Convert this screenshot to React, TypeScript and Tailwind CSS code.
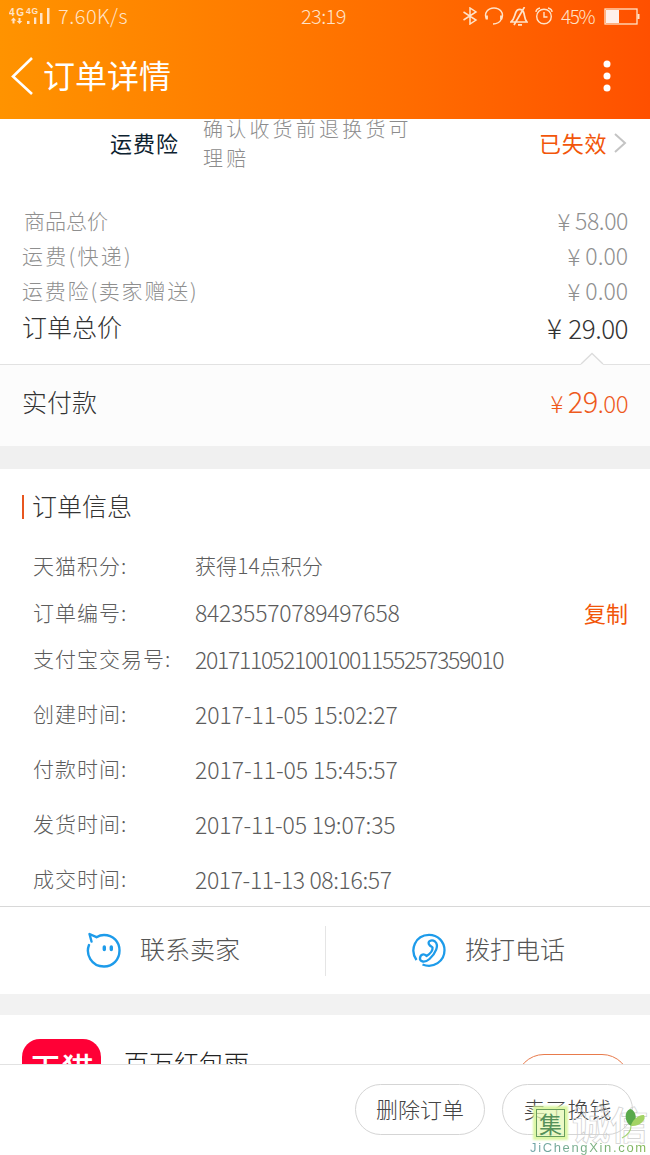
import React from "react";

type Fee = {
  label: string;
  amount: string;
  labelClass: string;
  amountClass: string;
};

type InfoRow = {
  label: string;
  value: string;
  rowClass: string;
  labelClass: string;
  valueClass: string;
  copy?: boolean;
};

const fees: Fee[] = [
  { label: "商品总价", amount: "58.00", labelClass: "pl-[2px]", amountClass: "tracking-[-0.4px]" },
  { label: "运费(快递)", amount: "0.00", labelClass: "tracking-[2.3px]", amountClass: "tracking-[0px]" },
  { label: "运费险(卖家赠送)", amount: "0.00", labelClass: "tracking-[1.8px]", amountClass: "tracking-[0px]" },
];

const infoRows: InfoRow[] = [
  { label: "天猫积分:", value: "获得14点积分", rowClass: "h-[47px]", labelClass: "tracking-[1px]", valueClass: "text-[21px] tracking-[0.1px]" },
  { label: "订单编号:", value: "84235570789497658", rowClass: "h-[47px]", labelClass: "tracking-[1px]", valueClass: "text-[23px] tracking-[-0.28px]", copy: true },
  { label: "支付宝交易号:", value: "2017110521001001155257359010", rowClass: "h-[46px]", labelClass: "tracking-[1px]", valueClass: "text-[23px] tracking-[-1.3px]" },
  { label: "创建时间:", value: "2017-11-05 15:02:27", rowClass: "h-[64px]", labelClass: "tracking-[1px]", valueClass: "text-[23px] tracking-[-0.08px]" },
  { label: "付款时间:", value: "2017-11-05 15:45:57", rowClass: "h-[46px]", labelClass: "tracking-[1px]", valueClass: "text-[23px] tracking-[-0.08px]" },
  { label: "发货时间:", value: "2017-11-05 19:07:35", rowClass: "h-[64px]", labelClass: "tracking-[1px]", valueClass: "text-[23px] tracking-[-0.2px]" },
  { label: "成交时间:", value: "2017-11-13 08:16:57", rowClass: "h-[46px]", labelClass: "tracking-[1px]", valueClass: "text-[23px] tracking-[-0.4px]" },
];

function StatusBar() {
  return (
    <div className="flex h-8 items-center text-[20px] leading-8 text-[#ffe3c8]">
      <div className="flex w-[292px] items-center pl-[9px]">
        <svg width="42" height="18" viewBox="0 0 42 18" className="mr-[7px]" fill="currentColor">
          <text x="0" y="8.5" fontSize="10" fontWeight="700" textLength="15" fontFamily="Liberation Sans, sans-serif">4G</text>
          <text x="17" y="7" fontSize="8.5" fontWeight="700" textLength="12" fontFamily="Liberation Sans, sans-serif">4G</text>
          <path d="M4.500 10.500l2.800 3H5.500v3h-2v-3H1.700zM10.500 17l-2.800-3h1.800v-3h2v3h1.800z" />
          <rect x="18" y="14" width="2.500" height="3" />
          <rect x="25" y="10.500" width="2.300" height="6.500" />
          <rect x="31" y="6" width="2.500" height="11" />
          <rect x="38" y="1" width="2.500" height="16" />
        </svg>
        <span className="tracking-[0.5px]">7.60K/s</span>
      </div>
      <span className="w-[170px] pl-[9px] tracking-[-0.6px]">23:19</span>
      <div className="flex items-center">
        {/* bluetooth */}
        <svg width="16" height="18" viewBox="0 0 16 18" fill="none" stroke="currentColor" strokeWidth="1.500">
          <path d="M1.500 5l12.500 8L8 17V1l6 4-12.500 8" />
        </svg>
        {/* headset */}
        <svg width="20" height="18" viewBox="0 0 20 18" className="ml-[6px]" fill="none" stroke="currentColor" strokeWidth="1.400">
          <path d="M2.500 12C-.5 6 4 1 10 1s10.500 5 7.500 11c-1.500 3-4 5-8.500 5" />
          <path d="M2.800 8.500v4M17.200 8.500v4" strokeWidth="2.200" />
        </svg>
        {/* muted bell */}
        <svg width="18" height="19" viewBox="0 0 18 19" className="ml-[6px]" fill="none" stroke="currentColor" strokeWidth="1.700">
          <path d="M1 15h16c-3-3-2-7-3.500-10C12 1.500 7.500 1.500 6 5 4.500 8 4.500 12 1 15zM8 17.800h4M14.500 0L4 18" />
        </svg>
        {/* alarm */}
        <svg width="18" height="18" viewBox="0 0 18 18" className="ml-[7px]" fill="none" stroke="currentColor" strokeWidth="1.400">
          <circle cx="9" cy="9.500" r="7.300" />
          <path d="M9 5v5h3.500M1 5c0-2 1.500-3.500 4-4M17 5c0-2-1.500-3.500-4-4" />
        </svg>
      </div>
      <span className="ml-[8px] w-[43px] text-[19px] tracking-[-1.4px]">45%</span>
      <svg width="36" height="17" viewBox="0 0 36 17" fill="none">
        <rect x="1" y="1" width="32" height="15" stroke="#ffe3c8" strokeWidth="1.300" />
        <rect x="2" y="2" width="13" height="13" fill="#fff0ea" />
        <rect x="33.500" y="6" width="2" height="5" fill="#ffe3c8" />
      </svg>
    </div>
  );
}

function Header() {
  return (
    <header className="h-[119px] shrink-0 bg-linear-to-r from-[#ff9300] to-[#ff5000]">
      <StatusBar />
      <div className="flex h-[87px] items-center pl-[10px] text-white">
        <svg width="24" height="40" viewBox="0 0 24 40" fill="none" stroke="currentColor" strokeWidth="2.600">
          <path d="M22 2L3 20.500 22 38" />
        </svg>
        <h1 className="-mt-[3px] ml-[9px] flex-1 text-[32px] font-normal">订单详情</h1>
        <svg width="8" height="32" viewBox="0 0 8 32" className="mr-[39px]" fill="currentColor">
          <circle cx="4" cy="4" r="3.500" />
          <circle cx="4" cy="16" r="3.500" />
          <circle cx="4" cy="28" r="3.500" />
        </svg>
      </div>
    </header>
  );
}

function Insurance() {
  return (
    <div className="flex h-[50px] items-center overflow-hidden pl-[110px]">
      <span className="-mt-[4px] w-[93px] text-[22px] font-normal tracking-[1px] text-[#0d2230]">运费险</span>
      <p className="-mt-[2px] w-[216px] text-[20px] leading-[29px] tracking-[3.2px] text-[#8c8c8c]">
        确认收货前退换货可理赔
      </p>
      <span className="-mt-[4px] ml-[120px] text-[22px] font-normal tracking-[0.7px] text-[#f2560a]">已失效</span>
      <svg width="14" height="22" viewBox="0 0 14 22" className="-mt-[2px] ml-[6px]" fill="none" stroke="#c4c4c4" strokeWidth="2">
        <path d="M2 2l10 9-10 9" />
      </svg>
    </div>
  );
}

function ChatIcon() {
  return (
    <svg width="36" height="36" viewBox="0 0 36 36" className="-mt-[2px]" fill="none" stroke="#1d9bea" strokeWidth="2.400" strokeLinejoin="round" strokeLinecap="round">
      <path d="M3 13C-.5 22 5 34.500 18 34.500c9 0 15.500-7 15.500-16S27 3 18 3c-3 0-5 .7-7.500 2.200L3.500 2l2 7.500" />
      <path d="M18.300 15v2.500M25.300 15v2.500" strokeWidth="3.400" />
    </svg>
  );
}

function PhoneIcon() {
  return (
    <svg width="36" height="36" viewBox="0 0 36 36" className="-mt-[2px]" fill="none" stroke="#1d9bea" strokeWidth="2.300" strokeLinejoin="round">
      <path d="M5.500 28C-1.500 18 4 3 18 2.800c9 0 15.500 7 15.500 15.500 0 11-11 18.500-22 14.200" />
      <path d="M18.500 13c-3-3.500 2-6 5.500-3.500 4.500 4 .5 12-5.500 17.500-4.500 4-10 3-9.500-1 .5-4 4-4.500 6.500-2 4-2.500 6.500-5 6-8.500-.5-1-2-1-3-2.500z" />
    </svg>
  );
}

function Watermark() {
  return (
    <div className="absolute bottom-0 left-[530px] h-[50px] w-[120px]">
      <div className="flex h-[36px] items-center">
        <span className="ml-[6px] flex h-[28px] w-[29px] items-center justify-center border-[1.5px] border-[#679c5c] bg-[#e6f8b4]/75 text-[23px] leading-none font-normal text-[#55905a] shadow-[0_0_2px_3px_#dcf7a4]">
          集
        </span>
        <span className="ml-[7px] text-[38px] leading-none font-bold whitespace-nowrap text-transparent [-webkit-text-stroke:0.7px_#cfcfcf]">
          诚信
        </span>
      </div>
      <p className="bg-linear-to-r from-[#6fa3a8] to-[#83b94f] bg-clip-text font-['Liberation_Sans',sans-serif] text-[13px] leading-[14px] tracking-[1.65px] whitespace-nowrap text-transparent">
        JiChengXin.com
      </p>
      <svg width="28" height="32" viewBox="0 0 28 32" className="absolute top-[3px] right-[3px]">
        <path d="M12 18C5 14 5 3 11 1c5 1 7 7 5 14z" fill="#59a94a" />
        <path d="M12 18c0-5 8-12 13-11 3 5-5 12-13 11z" fill="#a3d364" />
        <path d="M12 18c0 5-3 9-9 12" fill="none" stroke="#a8d67a" strokeWidth="1.200" />
      </svg>
    </div>
  );
}

export default function App() {
  return (
    <div className="relative flex h-[1155px] w-[650px] flex-col overflow-hidden bg-white font-['Noto_Sans_CJK_SC',sans-serif] font-light">
      <Header />

      {/* Price breakdown */}
      <section className="h-[245px] shrink-0 text-[#8f8f8f]">
        <Insurance />
        <div className="pt-[34px] pr-[22px] pl-[22px]">
          {fees.map((fee) => (
            <div key={fee.label} className="flex h-[35px] items-center justify-between">
              <span className={`text-[21px] ${fee.labelClass}`}>{fee.label}</span>
              <span className={`flex items-center text-[23px] ${fee.amountClass}`}>
                <span className="mr-[5px] text-[24px]">¥</span>
                {fee.amount}
              </span>
            </div>
          ))}
          <div className="flex h-[38px] items-center justify-between text-[#333]">
            <span className="text-[25px]">订单总价</span>
            <span className="flex items-center text-[26px] tracking-[-0.5px]">
              <span className="mr-[7px] text-[28px]">¥</span>29.00
            </span>
          </div>
        </div>
      </section>

      {/* Amount paid */}
      <section className="relative flex h-[82px] shrink-0 items-center justify-between border-t border-[#e2e2e2] bg-[#fcfcfc] px-[22px] pb-[8px]">
        <svg width="24" height="13" viewBox="0 0 24 13" className="absolute -top-[13px] right-[46px]">
          <path d="M1 12L12 1.500 23 12v1H1z" fill="#fcfcfc" />
          <path d="M1 12L12 1.500 23 12" fill="none" stroke="#dcdcdc" strokeWidth="1.300" />
        </svg>
        <span className="text-[25px] text-[#333]">实付款</span>
        <span className="flex items-baseline text-[24px] leading-[34px] tracking-[-0.5px] text-[#ee5a1c]">
          <span className="mr-[5px] text-[24px]">¥</span>
          <span className="text-[29px]">29</span>.00
        </span>
      </section>

      <div className="h-[23px] shrink-0 bg-[#f0f0f0]" />

      {/* Order info */}
      <section className="h-[437px] shrink-0 px-[22px] text-[#5c5c5c]">
        <div className="flex h-[73px] items-center">
          <i className="mt-[2px] h-[24px] w-[2px] bg-[#e8561f]" />
          <h2 className="ml-[8px] text-[25px] font-light text-[#333]">订单信息</h2>
        </div>
        {infoRows.map((row) => (
          <div key={row.label} className={`flex items-center pl-[11px] ${row.rowClass}`}>
            <span className={`w-[162px] text-[21px] whitespace-nowrap ${row.labelClass}`}>{row.label}</span>
            <span className={`flex-1 whitespace-nowrap ${row.valueClass}`}>{row.value}</span>
            {row.copy && <button className="text-[22px] font-normal text-[#f2560a]">复制</button>}
          </div>
        ))}
      </section>

      {/* Contact */}
      <section className="flex h-[88px] shrink-0 items-center border-t border-[#d8d8d8] text-[25px] text-[#555]">
        <div className="flex w-[325px] items-center pl-[86px]">
          <ChatIcon />
          <span className="-mt-[3px] ml-[18px]">联系卖家</span>
        </div>
        <div className="flex h-[50px] flex-1 items-center border-l border-[#e5e5e5] pl-[85px]">
          <PhoneIcon />
          <span className="-mt-[3px] ml-[18px]">拨打电话</span>
        </div>
      </section>

      <div className="h-[21px] shrink-0 bg-[#f2f2f2]" />

      {/* Promo card, cut off by the bottom bar */}
      <section className="flex h-[49px] shrink-0 items-start overflow-hidden pl-[22px]">
        <div className="mt-[24px] flex h-[79px] w-[79px] shrink-0 justify-center rounded-[18px] bg-[#ff0036] pt-[10px] text-[32px] leading-[36px] font-medium whitespace-nowrap text-white">
          天猫
        </div>
        <span className="mt-[29px] ml-[23px] text-[25px] leading-[36px] text-[#222]">百万红包雨</span>
        <div className="mt-[39px] ml-[267px] h-[56px] w-[114px] shrink-0 rounded-full border border-[#e87b4c]" />
      </section>

      {/* Bottom actions */}
      <footer className="flex h-[91px] shrink-0 items-center justify-end gap-[17px] border-t border-[#e2e2e2] bg-white pr-[17px] pb-[2px] text-[22px] text-[#444]">
        <button className="h-[51px] w-[130px] rounded-full border border-[#d5d5d5] pb-[2px]">删除订单</button>
        <button className="h-[51px] w-[131px] rounded-full border border-[#d5d5d5] pb-[2px]">卖了换钱</button>
      </footer>

      <Watermark />
    </div>
  );
}
